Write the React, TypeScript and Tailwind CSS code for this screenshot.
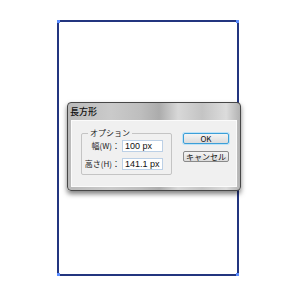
import React from 'react'

const JP = "font-['Noto_Sans_CJK_JP',sans-serif]"

function Handle({ className }: { className: string }) {
  return <span className={`absolute h-[3px] w-[3px] bg-[#5a8cff] ${className}`} />
}

function Field({ label, value }: { label: string; value: string }) {
  return (
    <div className="flex h-[12px] items-center">
      <span className={`flex w-[40px] justify-end whitespace-nowrap pr-[2px] text-[8px] leading-none text-[#222] ${JP}`}>{label}</span>
      <div className="h-[12px] w-[41px] whitespace-nowrap border border-[#bcd0e6] bg-white pl-[2px] text-[9px] leading-[10px] text-[#111] font-['Liberation_Sans',sans-serif]">
        {value}
      </div>
    </div>
  )
}

function DialogButton({ children, primary }: { children: React.ReactNode; primary?: boolean }) {
  return (
    <div
      className={`flex h-[11px] w-[46px] items-center justify-center whitespace-nowrap rounded-[2px] border bg-gradient-to-b from-[#f4f4f4] to-[#dcdcdc] text-[8px] leading-none text-[#111] ${JP} ${
        primary ? 'border-[#3c9fd8] shadow-[0_0_0_1px_#bfe3f7]' : 'border-[#8a8a8a]'
      }`}
    >
      {children}
    </div>
  )
}

export default function App() {
  return (
    <div className="relative h-[300px] w-[300px] overflow-hidden bg-white">
      <div className="pl-[57px] pt-[20px]">
        <div className="relative h-[256px] w-[182px] border-2 border-[#23357f]">
          <Handle className="-left-[2px] -top-[2px]" />
          <Handle className="-right-[2px] -top-[2px]" />
          <Handle className="-left-[2px] -bottom-[2px]" />
          <Handle className="-right-[2px] -bottom-[2px]" />
        </div>
      </div>

      {/* dialog window */}
      <div className="absolute left-[67px] top-[102px] flex h-[89px] w-[174px] flex-col rounded-[4px] border border-[#474747] bg-[linear-gradient(90deg,#bababa_0%,#cacaca_25%,#bebebe_42%,#acacac_53%,#d8d8d8_64%,#c4c4c4_78%,#dcdcdc_92%,#b2b2b2_100%)] shadow-[0_3px_5px_rgba(0,0,0,0.5)]">
        <div className={`h-[17px] pl-[2px] pt-[2px] text-[9px] font-medium leading-[14px] text-[#111] ${JP}`}>長方形</div>
        <div className="mx-[3px] mb-[3px] flex flex-1 border border-[#fbfbfb] bg-[#f0f0f0] pl-[9px] pt-[12px]">
          <div className="relative flex h-[42px] w-[91px] flex-col gap-[6px] rounded-[2px] border border-[#c4c4c4] pt-[6px]">
            <span className={`absolute -top-[6px] left-[6px] whitespace-nowrap bg-[#f0f0f0] px-[2px] text-[8px] leading-[10px] text-[#222] ${JP}`}>オプション</span>
            <Field label="幅(W)：" value="100 px" />
            <Field label="高さ(H)：" value="141.1 px" />
          </div>
          <div className="ml-[11px] flex flex-col gap-[7px]">
            <DialogButton primary>OK</DialogButton>
            <DialogButton>キャンセル</DialogButton>
          </div>
        </div>
      </div>
    </div>
  )
}
